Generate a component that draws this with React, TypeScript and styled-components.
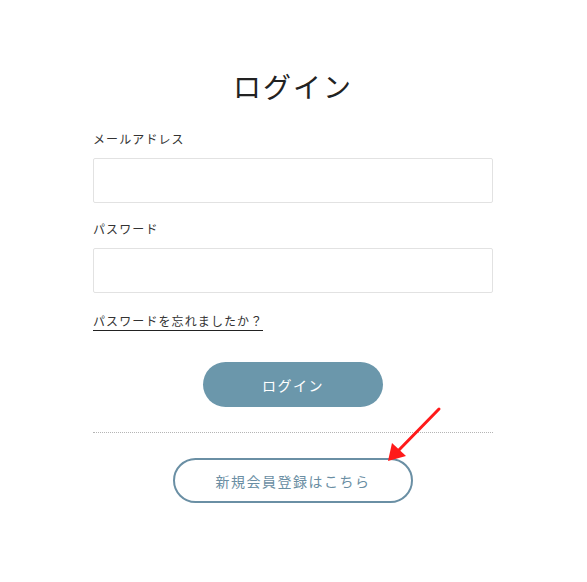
import styled, { createGlobalStyle } from "styled-components"

const GlobalStyle = createGlobalStyle`
  * { box-sizing: border-box; }
  body {
    margin: 0;
    background: #fff;
    font-family: "Noto Sans CJK JP", "Noto Sans", sans-serif;
    color: #222;
  }
`

const Page = styled.main`
  position: relative;
  width: 586px;
  height: 582px;
  padding-top: 64px;
`

const Form = styled.form`
  width: 400px;
  margin: 0 auto;
  display: flex;
  flex-direction: column;
`

const Title = styled.h1`
  margin: 0 0 21px;
  text-align: center;
  font-size: 28px;
  font-weight: 400;
  line-height: 44px;
  letter-spacing: 2px;
  color: #222;
`

const Field = styled.label`
  display: flex;
  flex-direction: column;
  margin-bottom: 16px;
`

const Label = styled.span`
  font-size: 12px;
  line-height: 20px;
  letter-spacing: 1.1px;
  color: #333;
  margin-bottom: 9px;
`

const Input = styled.input`
  height: 45px;
  width: 100%;
  border: 1px solid #e2e2e2;
  border-radius: 2px;
  background: #fff;
  outline: none;
`

const ForgotLink = styled.a`
  align-self: flex-start;
  margin-top: 3px;
  margin-bottom: 31px;
  font-size: 12px;
  line-height: 18px;
  letter-spacing: 1.1px;
  color: #333;
  text-decoration: none;
  border-bottom: 1px solid #222;
`

const PillButton = styled.button<{ $variant: "solid" | "outline"; $width: number }>`
  align-self: center;
  width: ${p => p.$width}px;
  height: 45px;
  border-radius: 23px;
  font-family: inherit;
  font-size: 14px;
  letter-spacing: 1.5px;
  cursor: pointer;
  background: ${p => (p.$variant === "solid" ? "#6b97ab" : "#fff")};
  color: ${p => (p.$variant === "solid" ? "#fff" : "#6a8ea3")};
  border: ${p => (p.$variant === "solid" ? "none" : "2px solid #6a8fa4")};
`

const Divider = styled.hr`
  width: 100%;
  margin: 25px 0 25px;
  border: none;
  border-top: 1px dotted #b5b5b5;
`

const Arrow = styled.svg`
  position: absolute;
  left: 384px;
  top: 404px;
`

export default function App() {
  return (
    <>
      <GlobalStyle />
      <Page>
        <Form onSubmit={e => e.preventDefault()}>
          <Title>ログイン</Title>
          <Field>
            <Label>メールアドレス</Label>
            <Input type="email" />
          </Field>
          <Field>
            <Label>パスワード</Label>
            <Input type="password" />
          </Field>
          <ForgotLink href="#">パスワードを忘れましたか？</ForgotLink>
          <PillButton type="submit" $variant="solid" $width={180}>ログイン</PillButton>
          <Divider />
          <PillButton type="button" $variant="outline" $width={240}>新規会員登録はこちら</PillButton>
        </Form>
        <Arrow width="60" height="62" viewBox="0 0 60 62">
          <line x1="55" y1="5" x2="13" y2="48" stroke="#ff1a1a" strokeWidth="3" strokeLinecap="round" />
          <polygon points="4,57 8,39 22,52" fill="#ff1a1a" />
        </Arrow>
      </Page>
    </>
  )
}
